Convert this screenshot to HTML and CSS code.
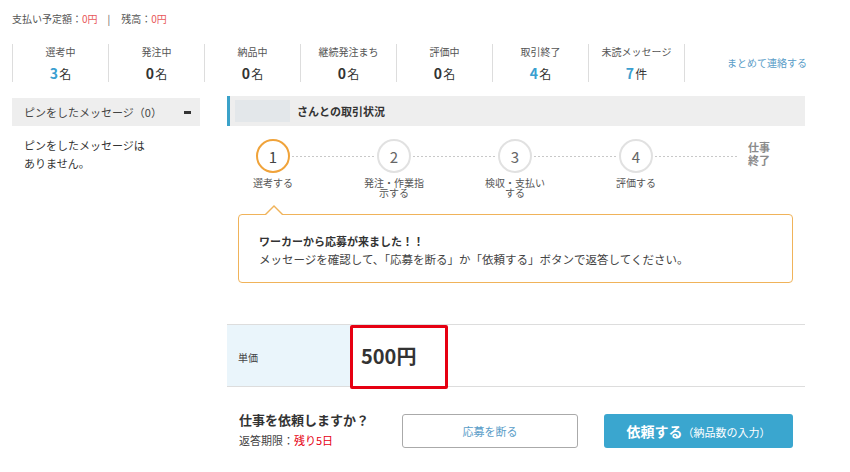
FILE: index.html
```html
<!DOCTYPE html>
<html lang="ja">
<head>
<meta charset="utf-8">
<link rel="stylesheet" href="styles.css">
</head>
<body>
<div class="page">
  <div class="balance">支払い予定額：<span class="red">0円</span><span class="sep">|</span>残高：<span class="red">0円</span></div>

  <div class="stats">
    <div class="stat"><div class="lbl">選考中</div><div class="num blue">3<span class="unit">名</span></div></div>
    <div class="stat"><div class="lbl">発注中</div><div class="num">0<span class="unit">名</span></div></div>
    <div class="stat"><div class="lbl">納品中</div><div class="num">0<span class="unit">名</span></div></div>
    <div class="stat"><div class="lbl">継続発注まち</div><div class="num">0<span class="unit">名</span></div></div>
    <div class="stat"><div class="lbl">評価中</div><div class="num">0<span class="unit">名</span></div></div>
    <div class="stat"><div class="lbl">取引終了</div><div class="num blue">4<span class="unit">名</span></div></div>
    <div class="stat"><div class="lbl">未読メッセージ</div><div class="num blue">7<span class="unit">件</span></div></div>
    <div class="stat link-cell"><span class="link">まとめて連絡する</span></div>
  </div>

  <div class="content">
    <aside class="side">
      <div class="side-head"><span>ピンをしたメッセージ（0）</span><span class="minus"></span></div>
      <p class="side-body">ピンをしたメッセージは<br>ありません。</p>
    </aside>

    <main class="main">
      <div class="main-head"><span class="blur"></span><span class="title">さんとの取引状況</span></div>

      <div class="circles">
        <div class="circle active">1</div><div class="dots"></div>
        <div class="circle">2</div><div class="dots"></div>
        <div class="circle">3</div><div class="dots"></div>
        <div class="circle">4</div><div class="dots"></div>
        <div class="finish"><div class="fl">仕事</div><div class="fl">終了</div></div>
      </div>
      <div class="labels">
        <div class="label">選考する</div>
        <div class="label">発注・作業指示する</div>
        <div class="label">検収・支払いする</div>
        <div class="label">評価する</div>
      </div>

      <div class="callout">
        <p class="c-title">ワーカーから応募が来ました！！</p>
        <p class="c-text">メッセージを確認して、「応募を断る」か「依頼する」ボタンで返答してください。</p>
      </div>

      <div class="price-row">
        <div class="price-label">単価</div>
        <div class="price-value">500円</div>
        <div class="annot"></div>
      </div>

      <div class="actions">
        <div class="ask">
          <div class="ask-title">仕事を依頼しますか？</div>
          <div class="ask-limit">返答期限：<span class="red2">残り5日</span></div>
        </div>
        <button class="btn decline">応募を断る</button>
        <button class="btn accept"><b>依頼する</b><span class="small">（納品数の入力）</span></button>
      </div>
    </main>
  </div>
</div>
</body>
</html>
```

FILE: styles.css
```css
* { box-sizing: border-box; }
body {
  margin: 0;
  font-family: "Noto Sans CJK JP", "Noto Sans", sans-serif;
  color: #333;
  background: #fff;
}
p { margin: 0; }
.page { width: 850px; padding: 0 0 0 12px; }

.balance {
  height: 26px;
  padding-top: 12px;
  font-size: 10px;
  line-height: 14px;
  color: #555;
}
.red { color: #e8575a; }
.sep { margin: 0 11px 0 10px; color: #555; }

.stats {
  display: flex;
  margin-top: 18px;
  height: 38px;
}
.stat {
  width: 96px;
  flex: none;
  border-left: 1px solid #ddd;
  text-align: center;
}
.lbl {
  font-size: 10px;
  line-height: 14px;
  color: #555;
  padding-top: 1px;
}
.num {
  font-size: 14px;
  font-weight: bold;
  line-height: 20px;
  margin-top: 4px;
  color: #333;
}
.num.blue { color: #3b9fd0; }
.unit { font-size: 12px; font-weight: normal; color: #333; margin-left: 1px; }
.link-cell {
  width: 140px;
  padding-left: 42px;
  text-align: left;
  display: flex;
  align-items: center;
  white-space: nowrap;
}
.link { font-size: 10px; color: #5a9dc8; line-height: 14px; margin-top: -1px; }

.content {
  display: flex;
  gap: 27px;
  margin-top: 14px;
}
.side { width: 188px; padding-top: 2px; }
.side-head {
  height: 28px;
  background: #eee;
  display: flex;
  align-items: center;
  justify-content: space-between;
  padding: 0 9px 0 12px;
  font-size: 11px;
  color: #444;
}
.minus { width: 7px; height: 3px; background: #333; }
.side-body {
  padding: 10px 0 0 12px;
  font-size: 11px;
  line-height: 18px;
  color: #333;
}

.main { width: 578px; }
.main-head {
  height: 30px;
  background: #eee;
  border-left: 3px solid #3ba2c9;
  display: flex;
  align-items: center;
  padding-left: 5px;
}
.blur {
  width: 55px;
  height: 22px;
  background: #e3e7ea;
  margin-right: 7px;
}
.title { font-size: 11px; font-weight: bold; color: #333; }

.circles {
  display: flex;
  align-items: center;
  padding-left: 29px;
  margin-top: 13px;
  height: 34px;
}
.circle {
  width: 34px;
  height: 34px;
  border-radius: 50%;
  border: 2px solid #e1e1e1;
  display: flex;
  align-items: center;
  justify-content: center;
  font-size: 15px;
  color: #666;
  flex: none;
}
.circle.active { border-color: #f0a33a; color: #444; }
.dots {
  width: 87px;
  height: 1px;
  flex: none;
  padding: 0 2px;
  background: repeating-linear-gradient(to right, #c8c8c8 0 2px, transparent 2px 4px) content-box;
}
.finish {
  margin-left: 8px;
  font-size: 11px;
  color: #8a8a8a;
  font-weight: bold;
  margin-top: -6px;
  display: flex;
  flex-direction: column;
  gap: 1px;
}
.fl { line-height: 12px; height: 12px; }
.labels {
  display: flex;
  gap: 57px;
  padding-left: 14px;
  margin-top: 5px;
}
.label {
  width: 64px;
  text-align: center;
  font-size: 10px;
  line-height: 10px;
  color: #555;
}

.callout {
  position: relative;
  margin: 16px 0 0 11px;
  width: 555px;
  height: 69px;
  border: 1px solid #f0b35a;
  border-radius: 4px;
  padding: 17px 0 0 20px;
}
.callout::before,
.callout::after {
  content: "";
  position: absolute;
  left: 26px;
  width: 0;
  height: 0;
  border-left: 9px solid transparent;
  border-right: 9px solid transparent;
}
.callout::before { top: -10px; border-bottom: 9px solid #f0b35a; }
.callout::after { top: -8px; border-bottom: 8px solid #fff; left: 27px; border-left-width: 8px; border-right-width: 8px; }
.c-title { font-size: 11px; font-weight: bold; line-height: 18px; color: #333; }
.c-text { font-size: 11.5px; line-height: 18px; color: #444; margin-top: 0; }

.price-row {
  position: relative;
  margin-top: 41px;
  height: 63px;
  border-top: 1px solid #ddd;
  border-bottom: 1px solid #ddd;
  display: flex;
}
.price-label {
  width: 123px;
  background: #eaf5fb;
  font-size: 10px;
  color: #444;
  padding: 25px 0 0 11px;
}
.price-value {
  padding: 16px 0 0 11px;
  font-size: 20px;
  font-weight: bold;
  color: #333;
}
.annot {
  position: absolute;
  left: 123px;
  top: 0;
  width: 98px;
  height: 64px;
  border: 3px solid #e60012;
  border-radius: 2px;
}

.actions {
  display: flex;
  align-items: flex-start;
  margin-top: 27px;
  padding-left: 12px;
}
.ask { width: 163px; }
.ask-title { font-size: 13px; font-weight: bold; line-height: 18px; color: #333; margin-top: -3px; }
.ask-limit { font-size: 11px; line-height: 18px; color: #444; margin-top: 2px; }
.red2 { color: #e60012; }
.btn {
  height: 34px;
  border-radius: 3px;
  font-family: inherit;
  cursor: pointer;
}
.decline {
  width: 176px;
  background: #fff;
  border: 1px solid #aaa;
  color: #5a9dc8;
  font-size: 11px;
}
.accept {
  width: 189px;
  margin-left: 26px;
  background: #3aa6cf;
  border: none;
  color: #fff;
}
.accept b { font-size: 14px; }
.accept .small { font-size: 11px; }
```
